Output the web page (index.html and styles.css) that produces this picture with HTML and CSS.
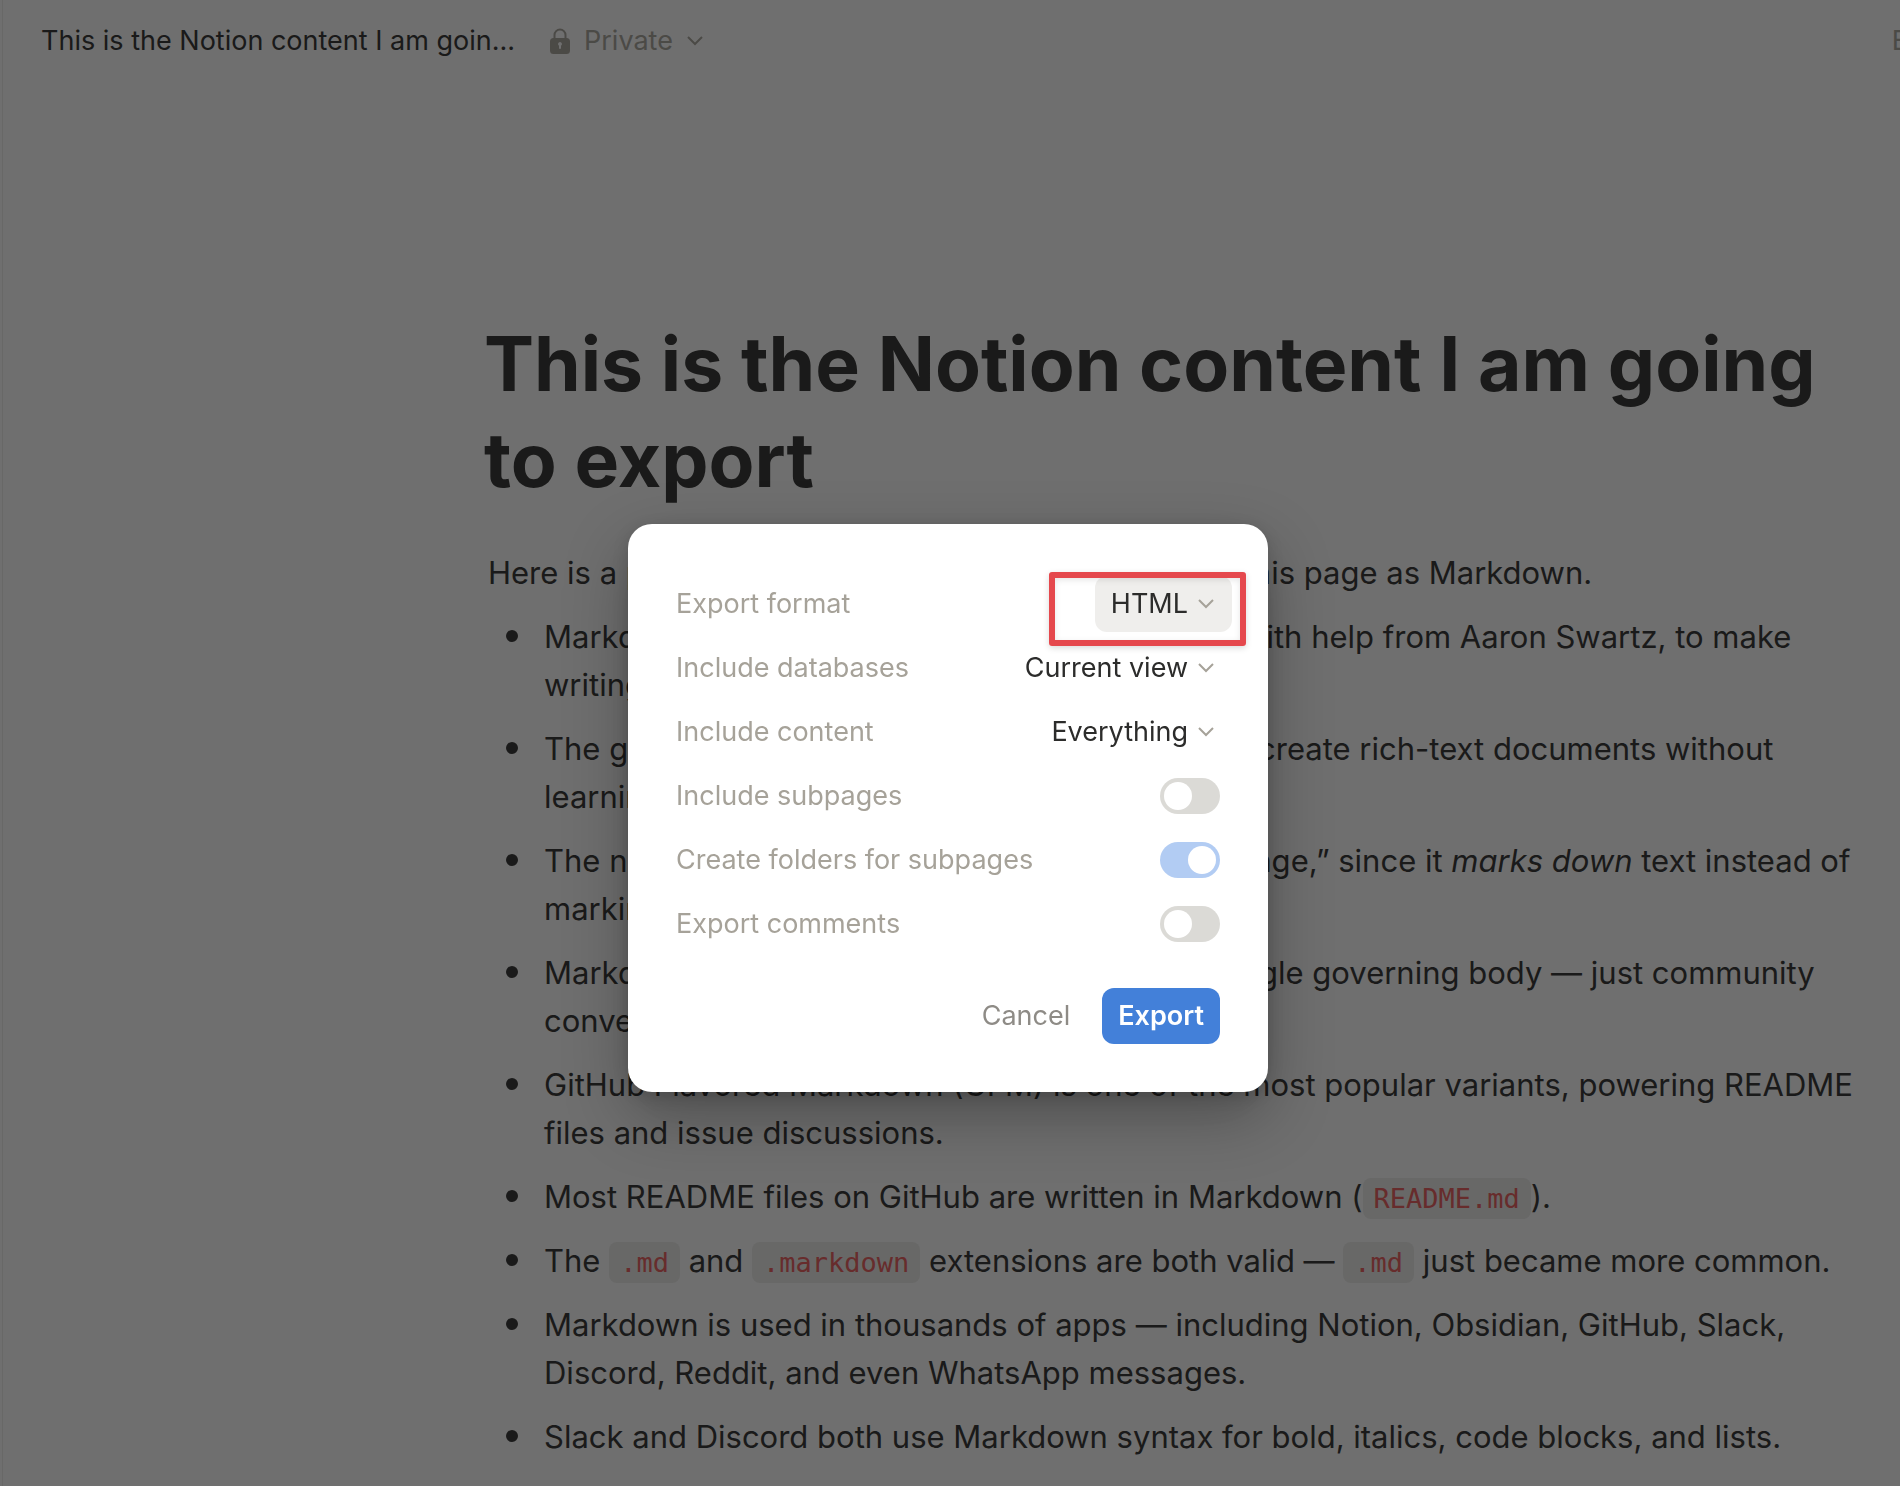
FILE: index.html
```html
<!DOCTYPE html>
<html lang="en">
<head>
    <meta charset="utf-8">
    <title>This is the Notion content I am going to export</title>
    <link rel="stylesheet" href="styles.css">
</head>
<body>
    <div class="page">
        <header class="topbar">
            <a class="crumb" href="#">This is the Notion content I am goin...</a>
            <button class="privacy" type="button">
                <svg class="lock" viewBox="0 0 20 26" aria-hidden="true">
                    <path d="M4.5 11V7a5.5 5.5 0 0 1 11 0v4" fill="none" stroke="currentColor" stroke-width="2"/>
                    <path fill="currentColor" fill-rule="evenodd" d="M3.5 10h13a3.500 3.500 0 0 1 3.500 3.500v9a3.500 3.500 0 0 1-3.500 3.500h-13A3.500 3.500 0 0 1 0 22.500v-9A3.500 3.500 0 0 1 3.500 10zM10 14a2 2 0 0 0-1 3.700V20a1 1 0 0 0 2 0v-2.300A2 2 0 0 0 10 14z"/>
                </svg>
                Private
                <svg class="chevron" viewBox="0 0 16 10" aria-hidden="true"><path d="M1 1l7 7 7-7"/></svg>
            </button>
            <span class="edited">Edited</span>
        </header>

        <main class="content">
            <h1>This is the Notion content I am going to export</h1>
            <p class="intro">Here is a page with facts in Markdown. I will export this page as Markdown.</p>
            <ul class="facts">
                <li><p>Markdown was coined in 2004 by John Gruber with help from Aaron Swartz, to make writing for the web easier.</p></li>
                <li><p>The goal was to offer a simple way for people to create rich-text documents without learning HTML.</p></li>
                <li><p>The name is a purposeful play on “markup language,” since it <em>marks down</em> text instead of marking it up.</p></li>
                <li><p>Markdown has no official owner and it has no single governing body — just community conventions.</p></li>
                <li><p>GitHub Flavored Markdown (GFM) is one of the most popular variants, powering README files and issue discussions.</p></li>
                <li><p>Most README files on GitHub are written in Markdown (<code>README.md</code>).</p></li>
                <li><p>The <code>.md</code> and <code>.markdown</code> extensions are both valid — <code>.md</code> just became more common.</p></li>
                <li><p>Markdown is used in thousands of apps — including Notion, Obsidian, GitHub, Slack, Discord, Reddit, and even WhatsApp messages.</p></li>
                <li><p>Slack and Discord both use Markdown syntax for bold, italics, code blocks, and lists.</p></li>
            </ul>
        </main>
    </div>

    <div class="overlay">
        <form class="modal" role="dialog" aria-label="Export">
            <div class="row">
                <label for="format">Export format</label>
                <span class="picker">
                    <select id="format" class="active"><option>HTML</option></select>
                    <svg class="chevron" viewBox="0 0 16 10" aria-hidden="true"><path d="M1 1l7 7 7-7"/></svg>
                </span>
                <span class="highlight"></span>
            </div>
            <div class="row">
                <label for="databases">Include databases</label>
                <span class="picker">
                    <select id="databases"><option>Current view</option></select>
                    <svg class="chevron" viewBox="0 0 16 10" aria-hidden="true"><path d="M1 1l7 7 7-7"/></svg>
                </span>
            </div>
            <div class="row">
                <label for="include">Include content</label>
                <span class="picker">
                    <select id="include"><option>Everything</option></select>
                    <svg class="chevron" viewBox="0 0 16 10" aria-hidden="true"><path d="M1 1l7 7 7-7"/></svg>
                </span>
            </div>
            <div class="row">
                <label for="subpages">Include subpages</label>
                <input class="toggle" type="checkbox" id="subpages">
            </div>
            <div class="row">
                <label for="folders">Create folders for subpages</label>
                <input class="toggle" type="checkbox" id="folders" checked>
            </div>
            <div class="row">
                <label for="comments">Export comments</label>
                <input class="toggle" type="checkbox" id="comments">
            </div>
            <div class="actions">
                <button class="cancel" type="button">Cancel</button>
                <button class="export" type="button">Export</button>
            </div>
        </form>
    </div>
</body>
</html>
```
FILE: styles.css
```css
* {
    box-sizing: border-box;
}

body {
    margin: 0;
    height: 100vh;
    overflow: hidden;
    font-family: Inter, "Liberation Sans", sans-serif;
    font-size: 31px;
    line-height: 48px;
    color: #2c2c2b;
    background: #fff;
}

button,
select {
    font: inherit;
    border: none;
    background: none;
    cursor: pointer;
}

.page {
    margin-left: 2px;
    height: 100vh;
    overflow: hidden;
    border-left: 1px solid #eeeeec;
}

/* top bar */
.topbar {
    display: flex;
    align-items: center;
    height: 82px;
    padding-left: 38px;
    font-size: 27px;
    white-space: nowrap;
}

.crumb {
    color: inherit;
    text-decoration: none;
}

.privacy {
    display: flex;
    align-items: center;
    margin-left: 35px;
    padding: 0;
    color: #a6a299;
}

.lock {
    width: 20px;
    height: 26px;
    margin-right: 14px;
}

.chevron {
    width: 16px;
    height: 10px;
    fill: none;
    stroke: #a6a299;
    stroke-width: 2;
}

.privacy .chevron {
    margin-left: 14px;
}

.edited {
    flex: none;
    margin-left: auto;
    margin-right: -72px;
    color: #a6a299;
}

/* document */
.content {
    padding: 234px 24px 0 481px;
}

h1 {
    margin: 0;
    font-size: 75px;
    line-height: 96px;
    font-weight: 700;
}

.intro {
    margin: 41px 0 0;
    padding: 0 4px;
}

.facts {
    list-style: none;
    margin: 8px 0 0;
    padding: 0 0 0 22px;
}

.facts li {
    display: flex;
    gap: 26px;
    padding: 8px 0;
}

.facts li::before {
    content: "";
    flex: none;
    width: 12px;
    height: 12px;
    margin-top: 17px;
    border-radius: 50%;
    background: #2c2c2b;
}

.facts p {
    margin: 0;
}

code {
    padding: 5px 11px;
    border-radius: 8px;
    font-family: "DejaVu Sans Mono", monospace;
    font-size: 27px;
    line-height: 40px;
    color: #eb5757;
    background: rgba(135, 131, 120, 0.15);
}

/* export dialog */
.overlay {
    position: fixed;
    inset: 0;
    display: flex;
    align-items: center;
    justify-content: center;
    padding: 130px 4px 0 0;
    background: rgba(15, 15, 15, 0.6);
}

.modal {
    width: 640px;
    padding: 48px;
    border-radius: 24px;
    background: #fff;
    box-shadow: 0 24px 64px rgba(0, 0, 0, 0.3), 0 4px 16px rgba(0, 0, 0, 0.15);
    font-size: 27px;
}

.row {
    position: relative;
    display: flex;
    align-items: center;
    justify-content: space-between;
    height: 64px;
}

.row label {
    color: #a6a299;
}

.picker {
    display: flex;
    align-items: center;
    margin-right: -12px;
}

.picker select {
    appearance: none;
    field-sizing: content;
    height: 56px;
    padding: 0 44px 0 16px;
    border-radius: 12px;
    color: #2c2c2b;
}

.picker .active {
    background: #efeeec;
}

.picker .chevron {
    margin-left: -34px;
    margin-right: 18px;
    pointer-events: none;
}

.highlight {
    position: absolute;
    top: 0;
    right: -26px;
    width: 197px;
    height: 74px;
    border: 6px solid #e5484d;
    border-radius: 3px;
    box-shadow: 0 2px 6px rgba(0, 0, 0, 0.15), inset 0 2px 6px rgba(0, 0, 0, 0.1);
    pointer-events: none;
}

.toggle {
    appearance: none;
    display: flex;
    width: 60px;
    height: 36px;
    margin: 0;
    padding: 4px;
    border-radius: 18px;
    background: #dbdad6;
    cursor: pointer;
}

.toggle::before {
    content: "";
    width: 28px;
    height: 28px;
    border-radius: 50%;
    background: #fff;
}

.toggle:checked {
    justify-content: flex-end;
    background: #b2ccf3;
}

.actions {
    display: flex;
    justify-content: flex-end;
    gap: 16px;
    padding-top: 32px;
}

.actions button {
    height: 56px;
    padding: 0 16px;
    border-radius: 12px;
}

.cancel {
    color: #8e8b86;
}

.export {
    color: #fff;
    background: #4380d9;
}

.actions .export {
    font-weight: 600;
}
```
